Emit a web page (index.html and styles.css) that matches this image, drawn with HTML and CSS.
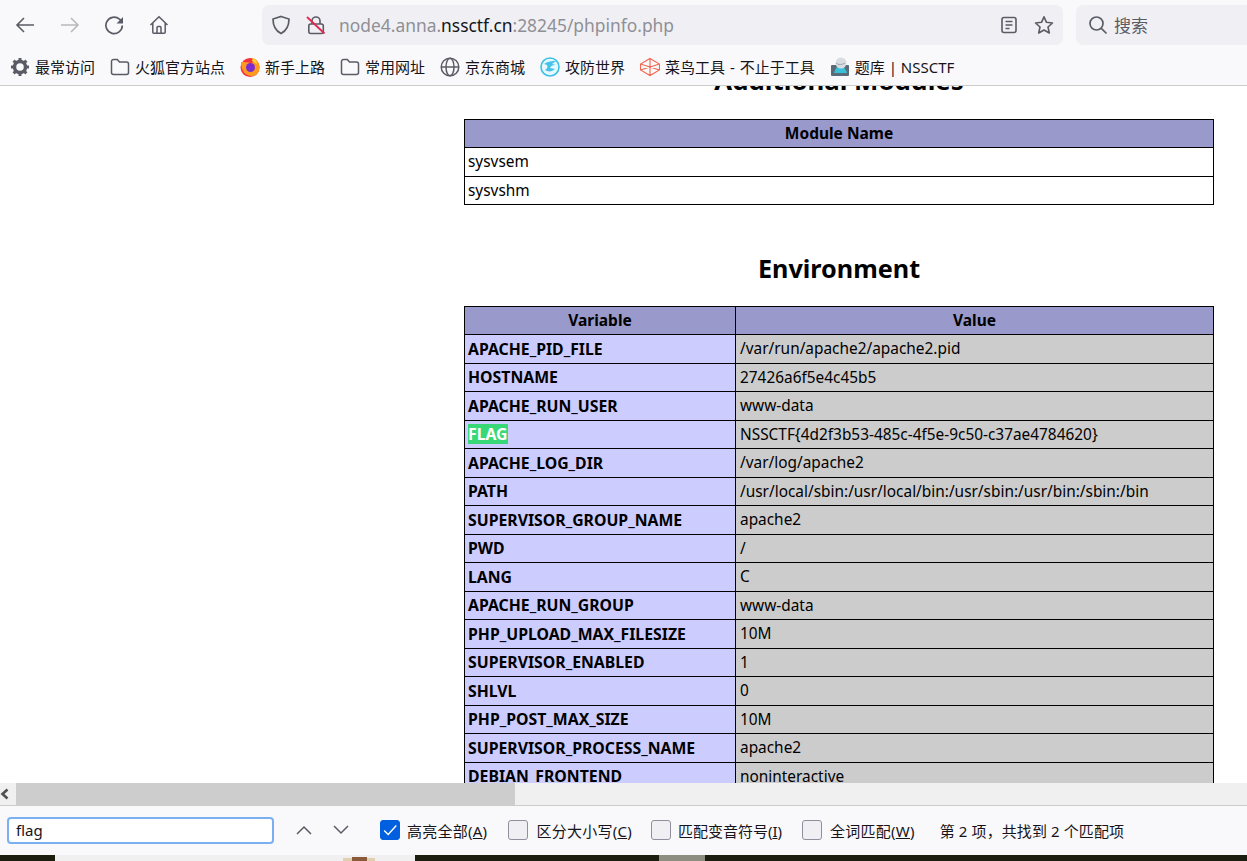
FILE: index.html
```html
<!DOCTYPE html>
<html lang="zh-CN">
<head>
<meta charset="utf-8">
<title>phpinfo</title>
<link rel="stylesheet" href="styles.css">
</head>
<body>
<div class="app">
  <header class="chrome">
    <div class="navrow">
      <div class="navbtns">
        <svg class="ico" viewBox="0 0 20 20"><path d="M19 10H2M9 3l-7 7 7 7" fill="none" stroke="#5b5b66" stroke-width="1.600"/></svg>
        <svg class="ico" viewBox="0 0 20 20"><path d="M1 10h17M11 3l7 7-7 7" fill="none" stroke="#b9b9bf" stroke-width="1.600"/></svg>
        <svg class="ico" viewBox="0 0 20 20"><path d="M18.300 10.500A8.200 8.200 0 1 1 15.500 4.200L18 6.500" fill="none" stroke="#5b5b66" stroke-width="1.700"/><path d="M19 2v6.500h-6.500z" fill="#5b5b66"/></svg>
        <svg class="ico" viewBox="0 0 20 20"><path d="M1.500 10L10 1.800 18.500 10M3.800 8v9.300a1 1 0 0 0 1 1h10.400a1 1 0 0 0 1-1V8M8 18v-5.500a1 1 0 0 1 1-1h2a1 1 0 0 1 1 1V18" fill="none" stroke="#5b5b66" stroke-width="1.500"/></svg>
      </div>
      <div class="urlbar">
        <svg class="ico shield" viewBox="0 0 20 20"><path d="M10 1.500l8 2.500c0 7-2 11.500-8 14.500C4 15.500 2 11 2 4z" fill="none" stroke="#5b5b66" stroke-width="1.700"/></svg>
        <svg class="ico lock" viewBox="0 0 20 20"><path d="M6 9V6a4 4 0 0 1 8 0v3" fill="none" stroke="#5b5b66" stroke-width="1.600"/><rect x="2.800" y="9" width="14.500" height="9.500" rx="2" fill="none" stroke="#5b5b66" stroke-width="1.600"/><path d="M1 2l17.500 16.500" stroke="#e22850" stroke-width="1.800"/></svg>
        <div class="url">node4.anna.<span class="url-host">nssctf.cn</span>:28245/phpinfo.php</div>
        <svg class="ico reader" viewBox="0 0 20 20"><rect x="3" y="2.500" width="14" height="15" rx="2" fill="none" stroke="#5b5b66" stroke-width="1.600"/><path d="M6.500 6.500h7M6.500 10h7M6.500 13.500h4" stroke="#5b5b66" stroke-width="1.500"/></svg>
        <svg class="ico star" viewBox="0 0 20 20"><path d="M10 1.800l2.500 5.500 6 .7-4.500 4 1.300 6L10 15l-5.300 3 1.300-6-4.500-4 6-.7z" fill="none" stroke="#5b5b66" stroke-width="1.600" stroke-linejoin="round"/></svg>
      </div>
      <div class="searchbar">
        <svg class="ico" viewBox="0 0 20 20"><circle cx="8.500" cy="8.500" r="6.500" fill="none" stroke="#5b5b66" stroke-width="1.700"/><path d="M13.300 13.300l5.200 5.200" stroke="#5b5b66" stroke-width="1.700"/></svg>
        <span class="search-text">搜索</span>
      </div>
    </div>
    <nav class="bookmarks">
      <div class="bm"><svg class="bm-ico" viewBox="0 0 20 20"><circle cx="10" cy="10" r="5.500" fill="none" stroke="#5b5b66" stroke-width="3.500"/><path d="M10 1v4M10 15v4M1 10h4M15 10h4M3.600 3.600l2.900 2.900M13.500 13.500l2.900 2.900M3.600 16.400l2.900-2.900M13.500 6.500l2.900-2.900" stroke="#5b5b66" stroke-width="3"/></svg><span>最常访问</span></div>
      <div class="bm"><svg class="bm-ico" viewBox="0 0 20 20"><path d="M1.500 15.500V4.500a2 2 0 0 1 2-2h3.800l2.200 2.500h7a2 2 0 0 1 2 2v8.500a2 2 0 0 1-2 2h-13a2 2 0 0 1-2-2z" fill="none" stroke="#5b5b66" stroke-width="1.500"/></svg><span>火狐官方站点</span></div>
      <div class="bm"><svg class="bm-ico" viewBox="0 0 20 20"><circle cx="10" cy="10.500" r="9.500" fill="#f5313f"/><path d="M1 5c0 7 3 14 11 14 5 0 7.500-4 7.500-8.500C19.500 6 17 3 14 1.500c1 3-1 3.500-3 4.500-3-1-6-1-10-1z" fill="#ff9a1f"/><circle cx="10.500" cy="10.500" r="4.500" fill="#7b2cd0"/><path d="M13 0c1 2 4 3 4 7l-5-3z" fill="#ffd52e"/></svg><span>新手上路</span></div>
      <div class="bm"><svg class="bm-ico" viewBox="0 0 20 20"><path d="M1.500 15.500V4.500a2 2 0 0 1 2-2h3.800l2.200 2.500h7a2 2 0 0 1 2 2v8.500a2 2 0 0 1-2 2h-13a2 2 0 0 1-2-2z" fill="none" stroke="#5b5b66" stroke-width="1.500"/></svg><span>常用网址</span></div>
      <div class="bm"><svg class="bm-ico" viewBox="0 0 20 20"><circle cx="10" cy="10" r="8.800" fill="none" stroke="#5b5b66" stroke-width="1.500"/><ellipse cx="10" cy="10" rx="4" ry="8.800" fill="none" stroke="#5b5b66" stroke-width="1.500"/><path d="M1.500 10h17" stroke="#5b5b66" stroke-width="1.500"/></svg><span>京东商城</span></div>
      <div class="bm"><svg class="bm-ico" viewBox="0 0 20 20"><circle cx="10" cy="10" r="9" fill="#e6f8fc" stroke="#3cc0e6" stroke-width="1.600"/><path d="M4 7c4-3 8-3 12-3l-4 3 4 1c-4 0-5 1-6 3l5 1c-3 3-7 3-10 1 2-1 3-3 2-5z" fill="#45c3e8"/></svg><span>攻防世界</span></div>
      <div class="bm"><svg class="bm-ico" viewBox="0 0 20 20"><path d="M10 1.500l9.500 5.500v6L10 18.500.5 13V7zM.5 7L19.500 13M19.500 7L.5 13M10 1.500v17" fill="none" stroke="#f0674e" stroke-width="1.100"/></svg><span class="bm-spaced">菜鸟工具 - 不止于工具</span></div>
      <div class="bm"><svg class="bm-ico" viewBox="0 0 20 20"><rect x="1" y="8" width="18" height="11" rx="1" fill="#5a6a78"/><path d="M4 16c2-5 3-7 5-8s6 2 8 8z" fill="#39c0d8"/><circle cx="11" cy="6" r="5.500" fill="#d9dde2"/><path d="M6 6c2 2 6 2 9 0" stroke="#9aa4ae" fill="none"/></svg><span>题库 | NSSCTF</span></div>
    </nav>
  </header>

  <main class="viewport">
    <div class="page">
      <h2 class="heading heading-clipped">Additional Modules</h2>
      <table class="info">
        <tr class="h"><th>Module Name</th></tr>
        <tr><td class="plain">sysvsem</td></tr>
        <tr><td class="plain">sysvshm</td></tr>
      </table>
      <h2 class="heading heading-env">Environment</h2>
      <table class="info">
        <colgroup><col class="col-var"><col></colgroup>
        <tr class="h"><th>Variable</th><th>Value</th></tr>
        <tr><td class="e">APACHE_PID_FILE</td><td class="v">/var/run/apache2/apache2.pid</td></tr>
        <tr><td class="e">HOSTNAME</td><td class="v">27426a6f5e4c45b5</td></tr>
        <tr><td class="e">APACHE_RUN_USER</td><td class="v">www-data</td></tr>
        <tr><td class="e"><span class="match">FLAG</span></td><td class="v">NSSCTF{4d2f3b53-485c-4f5e-9c50-c37ae4784620}</td></tr>
        <tr><td class="e">APACHE_LOG_DIR</td><td class="v">/var/log/apache2</td></tr>
        <tr><td class="e">PATH</td><td class="v">/usr/local/sbin:/usr/local/bin:/usr/sbin:/usr/bin:/sbin:/bin</td></tr>
        <tr><td class="e">SUPERVISOR_GROUP_NAME</td><td class="v">apache2</td></tr>
        <tr><td class="e">PWD</td><td class="v">/</td></tr>
        <tr><td class="e">LANG</td><td class="v">C</td></tr>
        <tr><td class="e">APACHE_RUN_GROUP</td><td class="v">www-data</td></tr>
        <tr><td class="e">PHP_UPLOAD_MAX_FILESIZE</td><td class="v">10M</td></tr>
        <tr><td class="e">SUPERVISOR_ENABLED</td><td class="v">1</td></tr>
        <tr><td class="e">SHLVL</td><td class="v">0</td></tr>
        <tr><td class="e">PHP_POST_MAX_SIZE</td><td class="v">10M</td></tr>
        <tr><td class="e">SUPERVISOR_PROCESS_NAME</td><td class="v">apache2</td></tr>
        <tr><td class="e">DEBIAN_FRONTEND</td><td class="v">noninteractive</td></tr>
      </table>
    </div>
  </main>

  <div class="hscroll">
    <div class="hscroll-btn"><svg class="hscroll-arrow" viewBox="0 0 10 12"><path d="M7.500 1.500L2.500 6l5 4.500" fill="none" stroke="#505050" stroke-width="2.600"/></svg></div>
    <div class="hscroll-thumb"></div>
  </div>

  <footer class="findbar">
    <div class="find-input">flag</div>
    <svg class="find-arrow find-up" viewBox="0 0 16 10"><path d="M1 9l7-7 7 7" fill="none" stroke="#5b5b66" stroke-width="1.500"/></svg>
    <svg class="find-arrow find-down" viewBox="0 0 16 10"><path d="M1 1l7 7 7-7" fill="none" stroke="#5b5b66" stroke-width="1.500"/></svg>
    <label class="opt opt-all"><span class="box box-on"><svg viewBox="0 0 20 20"><path d="M3.500 10.500l4.500 4.500 9-10" fill="none" stroke="#fff" stroke-width="1.600"/></svg></span><span>高亮全部(<u>A</u>)</span></label>
    <label class="opt opt-case"><span class="box"></span><span>区分大小写(<u>C</u>)</span></label>
    <label class="opt opt-dia"><span class="box"></span><span>匹配变音符号(<u>I</u>)</span></label>
    <label class="opt opt-word"><span class="box"></span><span>全词匹配(<u>W</u>)</span></label>
    <span class="find-status">第 2 项，共找到 2 个匹配项</span>
  </footer>
  <div class="desktop">
    <div class="desk-dark desk-a"></div>
    <div class="desk-light"><div class="desk-figure"><div class="desk-cap"></div></div></div>
    <div class="desk-dark desk-b"></div>
    <div class="desk-gray"></div>
    <div class="desk-dark desk-c"></div>
  </div>
</div>
</body>
</html>
```
FILE: styles.css
```css
* { box-sizing: border-box; }
html, body { margin: 0; height: 100%; overflow: hidden; }
body { font-family: "Noto Sans", "Noto Sans CJK SC", sans-serif; color: #000; background: #fff; }
.app { display: flex; flex-direction: column; height: 861px; width: 1247px; }

.chrome { height: 86px; flex: none; background: #f9f9fb; border-bottom: 1px solid #ccc; }
.navrow { display: flex; height: 50px; padding-top: 5px; }
.ico { width: 20px; height: 20px; flex: none; display: block; }
.navbtns { display: flex; align-items: center; gap: 24.700px; width: 262px; height: 40px; padding-left: 15px; }
.urlbar { width: 801px; height: 40px; background: #f0f0f4; border-radius: 7px; display: flex; align-items: center; padding-left: 9px; }
.lock { margin-left: 15px; }
.url { margin-left: 13px; font-size: 17.400px; color: #8f8f96; white-space: nowrap; flex: 1; font-family: "Noto Sans", sans-serif; }
.url-host { color: #15141a; }
.reader { margin-right: 15px; }
.star { margin-right: 9px; }
.searchbar { margin-left: 13px; flex: 1; height: 40px; background: #f0f0f4; border-radius: 7px 0 0 7px; display: flex; align-items: center; padding-left: 12px; }
.search-text { margin: 0 0 2px 6px; font-size: 17px; color: #5b5b66; }

.bookmarks { display: flex; height: 35px; padding: 0 0 2px 10px; gap: 15px; align-items: center; }
.bm { display: flex; align-items: center; gap: 5px; font-size: 15px; color: #15141a; white-space: nowrap; }
.bm-ico { width: 20px; height: 20px; flex: none; display: block; }
.bm-spaced { word-spacing: 1px; }

.viewport { height: 697px; flex: none; overflow: hidden; background: #fff; }
.page { width: 750px; margin-left: 464px; }
.heading { font-size: 25px; font-weight: 700; text-align: center; margin: 0; line-height: 34px; }
.heading-clipped { font-size: 25.800px; margin-top: -23px; margin-bottom: 21.500px; }
.heading-env { font-size: 25.200px; margin-top: 46px; margin-bottom: 20.500px; }
.info { width: 750px; border-collapse: collapse; table-layout: fixed; font-size: 15.400px; }
.info tr { height: 28.500px; }
.info th, .info td { border: 1px solid #000; padding: 0 4px; text-align: left; white-space: nowrap; line-height: 20px; }
.info th { background: #9999cc; text-align: center; font-weight: 700; font-size: 15.500px; padding-bottom: 1px; }
.col-var { width: 271px; }
.e { background: #ccccff; font-weight: 700; font-size: 15.800px; }
.info .e, .info .plain { padding-left: 3px; }
.info .v, .info .plain { padding-top: 1px; }
.v { background: #cccccc; }
.plain { background: #fff; }
.match { background: #38d878; color: #fff; display: inline-block; }

.hscroll { height: 22px; flex: none; display: flex; background: #f0f0f0; }
.hscroll-btn { width: 16px; display: flex; align-items: center; }
.hscroll-arrow { width: 10px; height: 12px; }
.hscroll-thumb { width: 499px; background: #cdcdcd; }

.findbar { height: 50px; flex: none; background: #f9f9fb; border-top: 1px solid #ccc; font-size: 15px; color: #15141a; display: flex; align-items: center; padding: 0 0 1px 7px; }
.find-input { width: 267px; height: 27px; background: #fff; border: 2px solid #7ab0f0; border-radius: 4px; padding-left: 7px; line-height: 22px; font-size: 15px; flex: none; }
.find-arrow { width: 16px; height: 10px; flex: none; }
.find-up { margin-left: 22px; }
.find-down { margin-left: 21px; }
.opt { display: flex; align-items: center; gap: 8px; white-space: nowrap; letter-spacing: .25px; }
.opt-all { margin-left: 31px; gap: 7px; }
.opt-case { margin-left: 21px; }
.opt-dia { margin-left: 19px; gap: 7px; letter-spacing: 0; }
.opt-word { margin-left: 20px; }
.box { width: 20px; height: 20px; border: 1px solid #8f8f9d; border-radius: 3px; background: #f0f0f4; flex: none; display: block; }
.box svg { display: block; width: 100%; height: 100%; }
.box-on { background: #0060df; border-color: #0060df; }
.find-status { margin-left: 25px; white-space: nowrap; letter-spacing: .1px; }

.desktop { flex: 1; display: flex; }
.desk-dark { background: #1c1f10; }
.desk-a { width: 55px; }
.desk-light { width: 360px; background: #f0f0f0; display: flex; justify-content: flex-end; padding-right: 40px; }
.desk-figure { width: 32px; margin-top: 3px; background: #e0d0b0; display: flex; justify-content: center; }
.desk-cap { width: 15px; background: #8a5a3a; margin-top: -1px; }
.desk-b { width: 244px; }
.desk-gray { width: 46px; background: #8d8d80; }
.desk-c { flex: 1; }
```
